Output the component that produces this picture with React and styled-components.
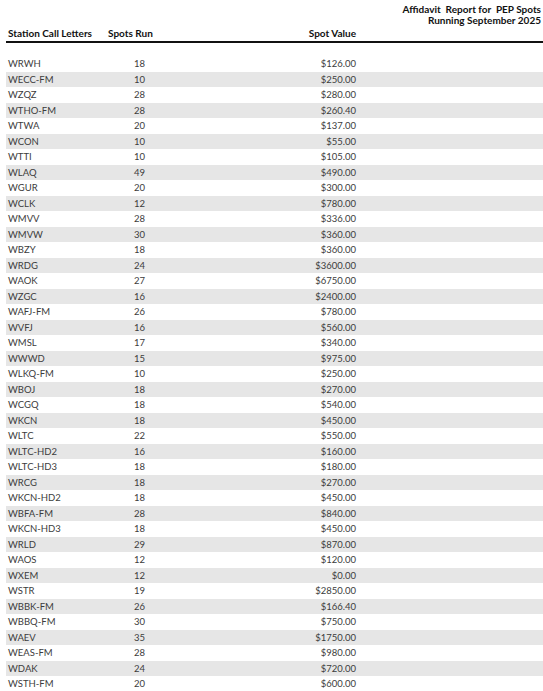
import React from 'react'
import styled, { createGlobalStyle } from 'styled-components'

const GlobalStyle = createGlobalStyle`
  html, body { margin: 0; padding: 0; background: #fff; }
  body { font-family: Lato, "Open Sans", sans-serif; overflow: hidden; }
`

const spots = [
  ['WRWH', 18, '$126.00'],
  ['WECC-FM', 10, '$250.00'],
  ['WZQZ', 28, '$280.00'],
  ['WTHO-FM', 28, '$260.40'],
  ['WTWA', 20, '$137.00'],
  ['WCON', 10, '$55.00'],
  ['WTTI', 10, '$105.00'],
  ['WLAQ', 49, '$490.00'],
  ['WGUR', 20, '$300.00'],
  ['WCLK', 12, '$780.00'],
  ['WMVV', 28, '$336.00'],
  ['WMVW', 30, '$360.00'],
  ['WBZY', 18, '$360.00'],
  ['WRDG', 24, '$3600.00'],
  ['WAOK', 27, '$6750.00'],
  ['WZGC', 16, '$2400.00'],
  ['WAFJ-FM', 26, '$780.00'],
  ['WVFJ', 16, '$560.00'],
  ['WMSL', 17, '$340.00'],
  ['WWWD', 15, '$975.00'],
  ['WLKQ-FM', 10, '$250.00'],
  ['WBOJ', 18, '$270.00'],
  ['WCGQ', 18, '$540.00'],
  ['WKCN', 18, '$450.00'],
  ['WLTC', 22, '$550.00'],
  ['WLTC-HD2', 16, '$160.00'],
  ['WLTC-HD3', 18, '$180.00'],
  ['WRCG', 18, '$270.00'],
  ['WKCN-HD2', 18, '$450.00'],
  ['WBFA-FM', 28, '$840.00'],
  ['WKCN-HD3', 18, '$450.00'],
  ['WRLD', 29, '$870.00'],
  ['WAOS', 12, '$120.00'],
  ['WXEM', 12, '$0.00'],
  ['WSTR', 19, '$2850.00'],
  ['WBBK-FM', 26, '$166.40'],
  ['WBBQ-FM', 30, '$750.00'],
  ['WAEV', 35, '$1750.00'],
  ['WEAS-FM', 28, '$980.00'],
  ['WDAK', 24, '$720.00'],
  ['WSTH-FM', 20, '$600.00'],
]

const Page = styled.div`
  width: 537px;
  margin-left: 6px;
  padding-top: 4px;
`

const Title = styled.div`
  text-align: right;
  padding-right: 2px;
  font-size: 10px;
  line-height: 11px;
  font-weight: 700;
  color: #111;
  white-space: pre;
`

const HeaderRow = styled.div`
  display: grid;
  grid-template-columns: 102px 60px 188px 1fr;
  align-items: end;
  margin-top: 1px;
  padding-bottom: 2px;
  border-bottom: 2px solid #111;
  font-size: 10px;
  line-height: 12px;
  font-weight: 700;
  color: #111;
`

const HeadCell = styled.div`
  padding-left: ${p => (p.$first ? '2px' : '0')};
  text-align: ${p => (p.$right ? 'right' : 'left')};
  white-space: nowrap;
`

const Body = styled.div`
  margin-top: 13px;
`

const Row = styled.div`
  display: grid;
  grid-template-columns: 128px 40px 182px 1fr;
  align-items: center;
  height: 15.5px;
  background: ${p => (p.$shaded ? '#e6e6e6' : '#fff')};
  font-size: 9.5px;
  color: #3c3c3c;
`

const Cell = styled.div`
  padding-left: ${p => (p.$first ? '2px' : '0')};
  text-align: ${p => (p.$right ? 'right' : 'left')};
  white-space: nowrap;
`

export default function App() {
  return (
    <>
      <GlobalStyle />
      <Page>
        <Title>
          {'Affidavit  Report for  PEP Spots'}
          <br />
          Running September 2025
        </Title>
        <HeaderRow>
          <HeadCell $first>Station Call Letters</HeadCell>
          <HeadCell>Spots Run</HeadCell>
          <HeadCell $right>Spot Value</HeadCell>
          <HeadCell />
        </HeaderRow>
        <Body>
          {spots.map(([call, run, value], i) => (
            <Row key={call} $shaded={i % 2 === 1}>
              <Cell $first>{call}</Cell>
              <Cell>{run}</Cell>
              <Cell $right>{value}</Cell>
              <Cell />
            </Row>
          ))}
        </Body>
      </Page>
    </>
  )
}
